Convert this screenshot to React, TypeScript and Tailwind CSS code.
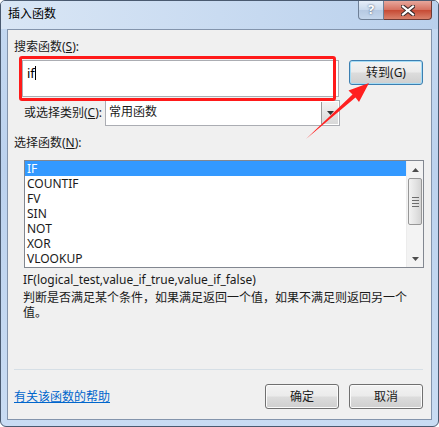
import React from "react";

const font = { fontFamily: '"Noto Sans", "Noto Sans CJK SC", sans-serif' };

const items = ["IF", "COUNTIF", "FV", "SIN", "NOT", "XOR", "VLOOKUP"];

function WinButton({ label, primary }: { label: string; primary?: boolean }) {
  return (
    <button
      className={
        "w-[74px] h-[25px] rounded-[3px] border text-[12px] text-[#1a1a1a] flex items-center justify-center bg-[linear-gradient(#f3f3f3_0%,#ebebeb_48%,#dcdcdc_52%,#cfcfcf_100%)] " +
        (primary
          ? "border-[#3c7fb1] shadow-[inset_0_0_0_1px_#a6dcf5]"
          : "border-[#707070] shadow-[inset_0_0_0_1px_#fbfbfb]")
      }
    >
      {label}
    </button>
  );
}

export default function App() {
  return (
    <div
      className="relative w-[439px] h-[427px] overflow-hidden border border-[#4a5a70] rounded-b-[6px] rounded-t-[5px] bg-[linear-gradient(180deg,#c5d9f1_0%,#bcd2ee_40%,#c9dcf3_100%)] flex flex-col"
      style={font}
    >
      {/* title bar */}
      <div className="h-[28px] flex items-start justify-between bg-[linear-gradient(90deg,#d9e6f5_0%,#c9dbf1_50%,#b9d0ec_100%)]">
        <span className="pl-[7px] pt-[5px] text-[12px] leading-[16px] text-[#000]">插入函数</span>
        <div className="flex mr-[6px]">
          <div className="w-[26px] h-[19px] rounded-bl-[4px] border border-t-0 border-[#6e7f96] bg-[linear-gradient(#e6eef8,#c9d9ec_50%,#b6c9e2_51%,#c4d6ec)] flex items-center justify-center text-[13px] font-bold text-white [text-shadow:0_0_2px_#33415a]">
            ?
          </div>
          <div className="w-[48px] h-[19px] rounded-br-[4px] border border-t-0 border-l-0 border-[#6e3a34] bg-[linear-gradient(#e7a79c,#d5705f_50%,#c64a34_51%,#d9826c)] flex items-center justify-center">
            <svg width="14" height="11" viewBox="0 0 14 11">
              <path d="M2 1.5 L12 9.5 M12 1.5 L2 9.5" stroke="#3a2a2a" strokeWidth="4.2" strokeLinecap="square" />
              <path d="M2 1.5 L12 9.5 M12 1.5 L2 9.5" stroke="#ffffff" strokeWidth="2.2" strokeLinecap="square" />
            </svg>
          </div>
        </div>
      </div>

      {/* content panel */}
      <div className="mx-[6px] h-[391px] border border-[#8394ac] bg-[#f0f0f0] pl-[6px] pr-[8px] pt-[9px] text-[12px] text-[#1a1a1a] flex flex-col">
        <div className="h-[16px] leading-[16px]">
          搜索函数(<span className="underline">S</span>):
        </div>

        <div className="mt-[5px] flex items-start">
          <div className="ml-[8px] w-[318px] h-[37px] bg-white border border-[#abadb3] pl-[4px] pt-[4px] flex items-start">
            <span className="leading-[16px] text-[13px] text-black">if</span>
            <span className="mt-[1px] w-px h-[14px] bg-black" />
          </div>
          <div className="ml-[10px]">
            <WinButton label="转到(G)" primary />
          </div>
        </div>

        <div className="mt-[3px] flex items-center h-[26px]">
          <span className="ml-[10px] w-[81px]">
            或选择类别(<span className="underline">C</span>):
          </span>
          <div className="w-[235px] h-[26px] bg-white border border-[#abadb3] flex items-stretch">
            <span className="flex-1 pl-[3px] pt-[3px] leading-[16px]">常用函数</span>
            <div className="w-[17px] m-px bg-[linear-gradient(#f2f2f2,#d8d8d8)] border-l border-[#9a9a9a] flex items-center justify-center">
              <svg width="7" height="4" viewBox="0 0 7 4">
                <path d="M0 0 H7 L3.5 4 Z" fill="#333" />
              </svg>
            </div>
          </div>
        </div>

        <div className="mt-[9px] h-[16px] leading-[16px]">
          选择函数(<span className="underline">N</span>):
        </div>

        <div className="mt-[9px] ml-[10px] w-[400px] h-[108px] border border-[#828790] bg-white flex">
          <div className="flex-1 flex flex-col">
            {items.map((it, i) => (
              <div
                key={it}
                className={
                  "h-[15px] leading-[15px] pl-[2px] overflow-hidden " +
                  (i === 0 ? "bg-[#3399ff] text-white" : "text-[#1a1a1a]")
                }
              >
                {it}
              </div>
            ))}
          </div>
          <div className="w-[17px] bg-[#f3f3f3] border-l border-[#ececec] flex flex-col items-center">
            <div className="h-[17px] flex items-center justify-center">
              <svg width="7" height="4" viewBox="0 0 7 4">
                <path d="M0 4 H7 L3.5 0 Z" fill="#4d4d4d" />
              </svg>
            </div>
            <div className="w-[14px] h-[47px] rounded-[2px] border border-[#979797] bg-[linear-gradient(90deg,#f2f2f2,#e4e4e4_50%,#d4d4d4)] flex flex-col items-center justify-center gap-[2px]">
              <span className="w-[7px] h-px bg-[#6c6c6c]" />
              <span className="w-[7px] h-px bg-[#6c6c6c]" />
              <span className="w-[7px] h-px bg-[#6c6c6c]" />
              <span className="w-[7px] h-px bg-[#6c6c6c]" />
            </div>
            <div className="flex-1" />
            <div className="h-[17px] flex items-center justify-center">
              <svg width="7" height="4" viewBox="0 0 7 4">
                <path d="M0 0 H7 L3.5 4 Z" fill="#4d4d4d" />
              </svg>
            </div>
          </div>
        </div>

        <div className="mt-[4px] ml-[9px] h-[16px] leading-[16px]">
          IF(logical_test,value_if_true,value_if_false)
        </div>
        <div className="mt-[2px] ml-[9px] leading-[15px] w-[392px]">
          判断是否满足某个条件，如果满足返回一个值，如果不满足则返回另一个值。
        </div>

        <div className="flex-1" />
        <div className="h-px bg-[#d6dfe6]" />

        <div className="mt-[14px] mb-[10px] flex items-center">
          <a className="text-[#0066cc] underline flex-1 leading-[16px]">有关该函数的帮助</a>
          <WinButton label="确定" />
          <div className="ml-[10px]">
            <WinButton label="取消" />
          </div>
        </div>
      </div>

      {/* annotation: red box */}
      <div className="absolute left-[18px] top-[55px] w-[317px] h-[45px] border-[3px] border-[#ff1a1a] rounded-[3px] pointer-events-none" />

      {/* annotation: red arrow */}
      <svg className="absolute left-0 top-0 pointer-events-none" width="439" height="427">
        <polygon
          points="305,138 351.5,93.5 347.5,89.5 368,82 358,101 354.5,96.5"
          fill="#ff2020"
        />
      </svg>
    </div>
  );
}
